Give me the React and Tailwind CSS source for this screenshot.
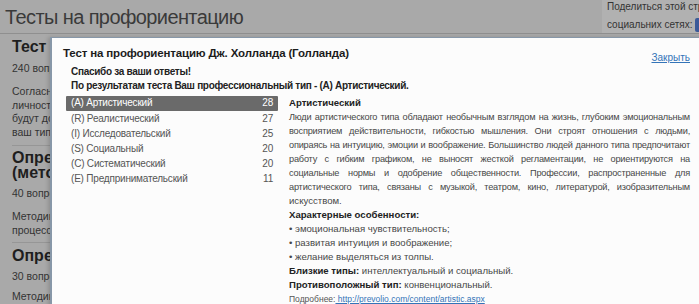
import React from "react";

const rows = [
  ["(A) Артистический", 28, true],
  ["(R) Реалистический", 27],
  ["(I) Исследовательский", 25],
  ["(S) Социальный", 20],
  ["(C) Систематический", 20],
  ["(E) Предпринимательский", 11],
];

const para = [
  "Люди артистического типа обладают необычным взглядом на жизнь, глубоким эмоциональным",
  "восприятием действительности, гибкостью мышления. Они строят отношения с людьми,",
  "опираясь на интуицию, эмоции и воображение. Большинство людей данного типа предпочитают",
  "работу с гибким графиком, не выносят жесткой регламентации, не ориентируются на",
  "социальные нормы и одобрение общественности. Профессии, распространенные для",
  "артистического типа, связаны с музыкой, театром, кино, литературой, изобразительным",
];

export default function App() {
  return (
    <div className="relative w-[699px] h-[304px] overflow-hidden bg-[#a9a9a9] font-['Liberation_Sans',Arial,sans-serif]">
      {/* page header */}
      <div className="h-[34px] border-b border-[#8f8f8f] flex justify-between">
        <h1 className="pl-[5px] pt-[5px] text-[20px] leading-[24px] tracking-[-0.6px] text-[#3a3a3a] whitespace-nowrap">
          Тесты на профориентацию
        </h1>
        <div className="w-[97px] bg-[#b1b1b1] pl-[5px] text-[10px] text-[#333] whitespace-nowrap overflow-hidden">
          <div className="leading-[12px] pt-[1px]">Поделиться этой страницей в</div>
          <div className="flex items-center gap-[3px] mt-[5px] leading-[12px]">
            <span>социальних сетях:</span>
            <span className="inline-block shrink-0 w-[13px] h-[14px] rounded-[2px] bg-[#3b5998] text-white text-[11px] font-bold leading-[15px] text-center">f</span>
          </div>
        </div>
      </div>

      {/* page left column (mostly hidden by the dialog) */}
      <div className="pl-[12px] w-[52px] overflow-hidden text-[#2a2a2a] whitespace-nowrap">
        <div className="pt-[3px] text-[16px] leading-[20px] font-bold text-[#1e1e1e]">Тест на</div>
        <div className="mt-[4px] text-[10.5px] leading-[14px] text-[#333]">240 вопросов</div>
        <div className="mt-[10px] text-[10.5px] leading-[13.5px] text-[#333]">
          <div>Согласно</div>
          <div>личности</div>
          <div>будут до</div>
          <div>ваш тип</div>
        </div>
        <div className="mt-[6px] border-t border-[#969696]" />
        <div className="mt-[4px] text-[16px] leading-[15px] font-bold text-[#1e1e1e]">
          <div>Определение</div>
          <div>(методика</div>
        </div>
        <div className="mt-[6px] text-[10.5px] leading-[14px] text-[#333]">40 вопросов</div>
        <div className="mt-[10px] text-[10.5px] leading-[13.5px] text-[#333]">
          <div>Методика</div>
          <div>процесс</div>
        </div>
        <div className="mt-[5px] border-t border-[#969696]" />
        <div className="mt-[5px] text-[16px] leading-[15px] font-bold text-[#1e1e1e]">Определение</div>
        <div className="mt-[6px] text-[10.5px] leading-[14px] text-[#333]">30 вопросов</div>
        <div className="mt-[7px] text-[10.5px] leading-[13.5px] text-[#333]">Методика</div>
      </div>

      {/* modal */}
      <div className="absolute left-[50px] top-[37px] w-[660px] h-[290px] bg-[#fcfcfc] border-l-2 border-t border-[#8797a8] shadow-[-2px_0_4px_rgba(0,0,0,0.15)]">
        <div className="flex justify-between items-start h-[16px] pl-[11px] pr-[20px] mt-[7px]">
          <div className="text-[11.5px] leading-[16px] tracking-[-0.15px] font-bold text-[#1c1c1c] whitespace-nowrap">
            Тест на профориентацию Дж. Холланда (Голланда)
          </div>
          <a className="mt-[6px] text-[10px] leading-[13px] text-[#3474b8] underline">Закрыть</a>
        </div>
        <div className="ml-[14px] mt-[4px]">
          <div className="pl-[5px] text-[10px] leading-[14px] tracking-[-0.3px] font-bold text-[#222] whitespace-nowrap">
            <div>Спасибо за ваши ответы!</div>
            <div>По результатам теста Ваш профессиональный тип - (А) Артистический.</div>
          </div>
          <div className="flex gap-[11px] mt-[3px]">
            <div className="w-[212px] shrink-0">
              {rows.map(([name, n, sel]) => (
                <div
                  key={name}
                  className={
                    sel
                      ? "flex justify-between h-[15px] px-[5px] text-[10px] tracking-[-0.2px] leading-[14px] bg-[#6a6a6a] text-white rounded-[1px]"
                      : "flex justify-between h-[15px] px-[5px] text-[10px] tracking-[-0.2px] leading-[15px] text-[#555]"
                  }
                >
                  <span>{name}</span>
                  <span>{n}</span>
                </div>
              ))}
            </div>
            <div className="w-[401px] shrink-0 text-[9.6px] leading-[14px] text-[#474747]">
              <div className="font-bold text-[#222]">Артистический</div>
              {para.map((l) => (
                <div key={l} className="text-justify [text-align-last:justify] whitespace-nowrap text-[9.2px] tracking-[-0.2px]">{l}</div>
              ))}
              <div>искусством.</div>
              <div className="font-bold text-[#222]">Характерные особенности:</div>
              <div>• эмоциональная чувствительность;</div>
              <div>• развитая интуиция и воображение;</div>
              <div>• желание выделяться из толпы.</div>
              <div>
                <span className="font-bold text-[#222]">Близкие типы:</span> интеллектуальный и социальный.
              </div>
              <div>
                <span className="font-bold text-[#222]">Противоположный тип:</span> конвенциональный.
              </div>
              <div className="text-[8.5px] text-[#555]">
                Подробнее:<a className="text-[#3474b8] underline"> http://prevolio.com/content/artistic.aspx</a>
              </div>
            </div>
          </div>
        </div>
      </div>
    </div>
  );
}
